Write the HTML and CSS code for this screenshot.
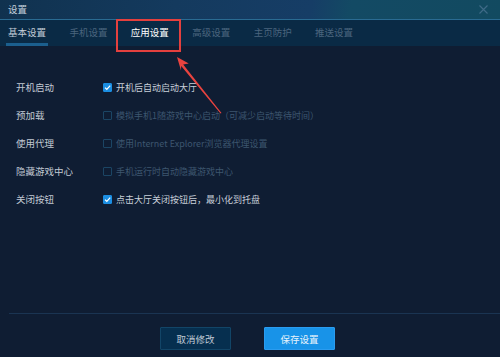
FILE: index.html
```html
<!DOCTYPE html>
<html lang="zh">
<head>
<meta charset="utf-8">
<title>设置</title>
<link rel="stylesheet" href="styles.css">
</head>
<body>
<div class="window">
  <div class="titlebar">
    <span class="title">设置</span>
    <svg class="close" width="9" height="9" viewBox="0 0 9 9"><path d="M0.5 0.5 L8.5 8.5 M8.5 0.5 L0.5 8.5" stroke="#3f6b88" stroke-width="1.1" fill="none"/></svg>
  </div>
  <div class="tabs">
    <div class="tab active">基本设置</div>
    <div class="tab">手机设置</div>
    <div class="tab current">应用设置</div>
    <div class="tab">高级设置</div>
    <div class="tab">主页防护</div>
    <div class="tab">推送设置</div>
  </div>
  <div class="content">
    <div class="row">
      <span class="label">开机启动</span>
      <span class="box checked"><svg width="9" height="9" viewBox="0 0 9 9"><path d="M2 4.6 L3.8 6.4 L7.2 2.6" stroke="#fff" stroke-width="1.3" fill="none"/></svg></span>
      <span class="opt">开机后自动启动大厅</span>
    </div>
    <div class="row">
      <span class="label">预加载</span>
      <span class="box"></span>
      <span class="opt disabled">模拟手机1随游戏中心启动（可减少启动等待时间）</span>
    </div>
    <div class="row">
      <span class="label">使用代理</span>
      <span class="box"></span>
      <span class="opt disabled">使用Internet Explorer浏览器代理设置</span>
    </div>
    <div class="row">
      <span class="label">隐藏游戏中心</span>
      <span class="box"></span>
      <span class="opt disabled">手机运行时自动隐藏游戏中心</span>
    </div>
    <div class="row">
      <span class="label">关闭按钮</span>
      <span class="box checked"><svg width="9" height="9" viewBox="0 0 9 9"><path d="M2 4.6 L3.8 6.4 L7.2 2.6" stroke="#fff" stroke-width="1.3" fill="none"/></svg></span>
      <span class="opt">点击大厅关闭按钮后，最小化到托盘</span>
    </div>
  </div>
  <div class="footer">
    <button class="btn cancel">取消修改</button>
    <button class="btn save">保存设置</button>
  </div>
  <div class="highlight"></div>
  <svg class="arrow" width="500" height="357" viewBox="0 0 500 357">
    <polygon points="177,57 188.8,63.6 183.2,64.4 221.5,113 220.5,113.6 181.2,66 181,70.5" fill="#e8433f"/>
  </svg>
</div>
</body>
</html>
```

FILE: styles.css
```css
* { box-sizing: border-box; }
html, body { margin: 0; padding: 0; }
body {
  width: 500px;
  height: 357px;
  overflow: hidden;
  background: #0f1d33;
  font-family: "Noto Sans CJK SC", "Noto Sans", sans-serif;
}
.window {
  position: relative;
  width: 500px;
  height: 357px;
  display: flex;
  flex-direction: column;
  background: #0f1d33;
}
.titlebar {
  height: 20px;
  flex: none;
  display: flex;
  align-items: center;
  justify-content: space-between;
  padding: 0 12px 1px 8px;
  background: linear-gradient(100deg, #10324f 0%, #143a5e 35%, #163d66 62%, #134a64 70%, #124a60 100%);
  border-bottom: 1px solid #2a6b92;
}
.title {
  color: #c3d0dc;
  font-size: 9.5px;
  line-height: 12px;
}
.close { display: block; }
.tabs {
  height: 26px;
  flex: none;
  display: flex;
  align-items: stretch;
  gap: 19.4px;
  padding-left: 6px;
  background: #0a2a45;
}
.tab {
  padding: 0 2px;
  font-size: 9.5px;
  line-height: 26px;
  color: #4b657e;
  border-bottom: 3px solid transparent;
  padding-top: 1px;
  line-height: 22px;
}
.tab.active {
  color: #c2ccd6;
  border-bottom-color: #1b5f8e;
}
.tab.current {
  color: #ffffff;
}
.content {
  flex: 1;
  padding: 27px 0 0 16px;
  display: flex;
  flex-direction: column;
}
.row {
  height: 28px;
  display: flex;
  align-items: center;
}
.label {
  width: 87px;
  color: #c2cad4;
  font-size: 9.5px;
}
.box {
  width: 9px;
  height: 9px;
  border: 1px solid #1b4564;
  border-radius: 1px;
  margin-right: 4px;
  display: flex;
}
.box.checked {
  background: #1b8ee2;
  border-color: #1b8ee2;
}
.box.checked svg { margin: -1px; }
.opt {
  color: #c8d0d9;
  font-size: 9px;
}
.opt.disabled { color: #3d566f; }
.footer {
  height: 44px;
  flex: none;
  margin-left: 9px;
  border-top: 1px solid #1a3452;
  display: flex;
  justify-content: center;
  align-items: flex-start;
  gap: 33px;
  padding: 13px 14px 0 0;
}
.btn {
  width: 71px;
  height: 23px;
  padding: 0;
  border-radius: 1px;
  font-family: "Noto Sans CJK SC", "Noto Sans", sans-serif;
  font-size: 9.5px;
}
.cancel {
  background: #062f4f;
  border: 1px solid #124567;
  color: #c0cbd6;
}
.save {
  background: #1893e8;
  border: 1px solid #2a9cf0;
  color: #e8f3fc;
}
.highlight {
  position: absolute;
  left: 116px;
  top: 19px;
  width: 65px;
  height: 33px;
  border: 2.5px solid #e4403e;
}
.arrow {
  position: absolute;
  left: 0;
  top: 0;
  pointer-events: none;
}
```
